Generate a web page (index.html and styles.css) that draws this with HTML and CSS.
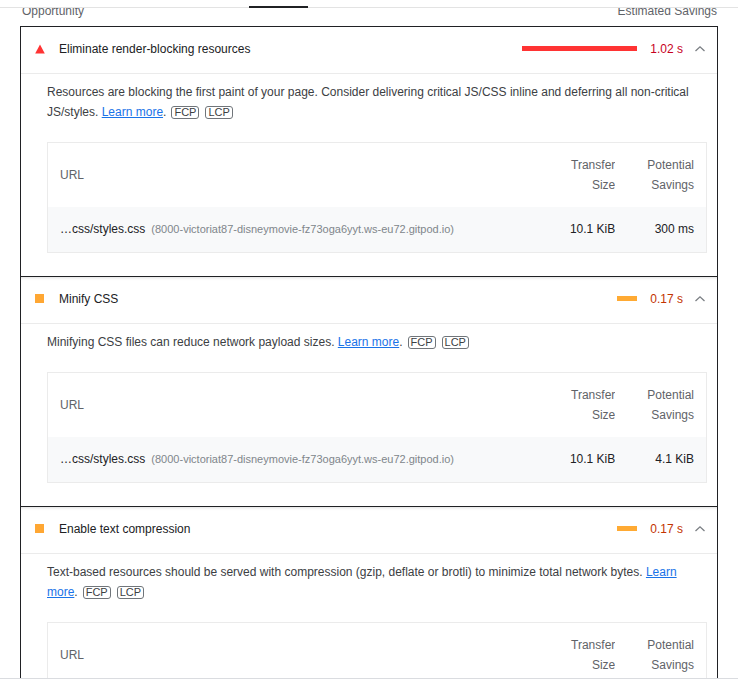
FILE: index.html
```html
<!DOCTYPE html>
<html lang="en">
<head>
<meta charset="utf-8">
<title>Opportunities</title>
<link rel="stylesheet" href="styles.css">
</head>
<body>
<div class="page">
  <div class="topbar"><span class="tab-ind"></span></div>
  <div class="colhead">
    <div class="colhead-inner"><span>Opportunity</span><span>Estimated Savings</span></div>
  </div>
  <div class="audits">
    <div class="audit">
      <div class="audit-header">
        <svg class="icon" width="10" height="10" viewBox="0 0 10 10"><polygon points="5,0.5 9.8,9.5 0.2,9.5" fill="#ff3333"/></svg>
        <span class="title">Eliminate render-blocking resources</span>
        <span class="bar bar-fail" style="width:115px"></span>
        <span class="value value-fail">1.02 s</span>
        <svg class="chev" width="14" height="10" viewBox="0 0 14 10"><polyline points="2.5,7 7,2.8 11.5,7" fill="none" stroke="#7a7e83" stroke-width="1.3"/></svg>
      </div>
      <div class="audit-body">
        <p class="desc">Resources are blocking the first paint of your page. Consider delivering critical JS/CSS inline and deferring all non-critical JS/styles. <a class="link" href="#">Learn more</a>.<span class="tag">FCP</span><span class="tag">LCP</span></p>
        <div class="table">
          <div class="th th-url">URL</div>
          <div class="th num">Transfer<br>Size</div>
          <div class="th num">Potential<br>Savings</div>
          <div class="td td-url"><span class="file">…css/styles.css</span><span class="host">(8000-victoriat87-disneymovie-fz73oga6yyt.ws-eu72.gitpod.io)</span></div>
          <div class="td num">10.1 KiB</div>
          <div class="td num">300 ms</div>
        </div>
      </div>
    </div>
    <div class="audit">
      <div class="audit-header">
        <span class="square"></span>
        <span class="title">Minify CSS</span>
        <span class="bar bar-avg" style="width:20px"></span>
        <span class="value value-avg">0.17 s</span>
        <svg class="chev" width="14" height="10" viewBox="0 0 14 10"><polyline points="2.5,7 7,2.8 11.5,7" fill="none" stroke="#7a7e83" stroke-width="1.3"/></svg>
      </div>
      <div class="audit-body">
        <p class="desc">Minifying CSS files can reduce network payload sizes. <a class="link" href="#">Learn more</a>.<span class="tag">FCP</span><span class="tag">LCP</span></p>
        <div class="table">
          <div class="th th-url">URL</div>
          <div class="th num">Transfer<br>Size</div>
          <div class="th num">Potential<br>Savings</div>
          <div class="td td-url"><span class="file">…css/styles.css</span><span class="host">(8000-victoriat87-disneymovie-fz73oga6yyt.ws-eu72.gitpod.io)</span></div>
          <div class="td num">10.1 KiB</div>
          <div class="td num">4.1 KiB</div>
        </div>
      </div>
    </div>
    <div class="audit">
      <div class="audit-header">
        <span class="square"></span>
        <span class="title">Enable text compression</span>
        <span class="bar bar-avg" style="width:20px"></span>
        <span class="value value-avg">0.17 s</span>
        <svg class="chev" width="14" height="10" viewBox="0 0 14 10"><polyline points="2.5,7 7,2.8 11.5,7" fill="none" stroke="#7a7e83" stroke-width="1.3"/></svg>
      </div>
      <div class="audit-body">
        <p class="desc">Text-based resources should be served with compression (gzip, deflate or brotli) to minimize total network bytes. <a class="link" href="#">Learn more</a>.<span class="tag">FCP</span><span class="tag">LCP</span></p>
        <div class="table">
          <div class="th th-url">URL</div>
          <div class="th num">Transfer<br>Size</div>
          <div class="th num">Potential<br>Savings</div>
          <div class="td td-url"><span class="file">…css/styles.css</span><span class="host">(8000-victoriat87-disneymovie-fz73oga6yyt.ws-eu72.gitpod.io)</span></div>
          <div class="td num">10.1 KiB</div>
          <div class="td num">1.2 KiB</div>
        </div>
      </div>
    </div>
  </div>
</div>
</body>
</html>
```
FILE: styles.css
```css
html, body {
  margin: 0;
  padding: 0;
  background: #ffffff;
}
body {
  font-family: "Liberation Sans", Arial, sans-serif;
  font-size: 12px;
  color: #202124;
}
.page {
  height: 678px;
  overflow: hidden;
  border-bottom: 1px solid #dadce0;
}
.topbar {
  height: 7px;
  border-bottom: 1px solid #e3e3e3;
  display: flex;
  align-items: flex-end;
  padding-left: 249px;
}
.tab-ind {
  display: block;
  width: 59px;
  height: 2px;
  margin-bottom: -1px;
  background: #202124;
}
.colhead {
  height: 18px;
  overflow: hidden;
}
.colhead-inner {
  margin-top: -7px;
  line-height: 20px;
  display: flex;
  justify-content: space-between;
  padding: 0 21px 0 22px;
  color: #5f6368;
}
.audits {
  padding: 0 20px;
}
.audit {
  border: 1px solid #202124;
}
.audit + .audit {
  border-top: none;
}
.audit-header {
  display: flex;
  align-items: center;
  height: 43px;
  padding: 0 10px 3px 14px;
  border-bottom: 1px solid #ebebeb;
  line-height: 20px;
}
.audit + .audit .audit-header {
  box-shadow: inset 0 3px 3px -2px rgba(0, 0, 0, 0.12);
}
.icon {
  display: block;
  flex: none;
}
.square {
  display: block;
  flex: none;
  width: 9px;
  height: 9px;
  margin-right: 1px;
  background: #ffa733;
}
.title {
  margin-left: 14px;
  flex: 1;
  color: #202124;
}
.bar {
  display: block;
  height: 5px;
  flex: none;
}
.bar-fail { background: #ff3333; }
.bar-avg { background: #ffaa33; }
.value {
  margin-left: 13px;
}
.value-fail { color: #c7001e; }
.value-avg { color: #c33300; }
.chev {
  display: block;
  margin-left: 10px;
  flex: none;
}
.audit-body {
  padding: 8px 10px 23px 26px;
}
.desc {
  margin: 0;
  line-height: 20px;
  color: #3c4043;
}
.link {
  color: #1a73e8;
  text-decoration: underline;
}
.tag {
  display: inline-block;
  font-size: 11px;
  line-height: 11px;
  padding: 0 2px;
  margin-left: 5px;
  border: 1px solid #70757a;
  border-radius: 3px;
  color: #3c4043;
  vertical-align: 0;
}
.tag + .tag {
  margin-left: 6px;
}
.table {
  margin-top: 20px;
  border: 1px solid #ebebeb;
  display: grid;
  grid-template-columns: 1fr auto auto;
}
.th, .td {
  line-height: 20px;
}
.th {
  padding: 12px 0;
  color: #5f6368;
  background: #ffffff;
}
.td {
  padding: 12px 0 13px;
  background: #f8f9fa;
}
.th-url, .td-url {
  padding-left: 12px;
  display: flex;
  align-items: center;
}
.num {
  text-align: right;
  padding-left: 32px;
}
.table > .num:nth-child(3), .table > .num:nth-child(6) {
  padding-right: 12px;
}
.file {
  color: #202124;
}
.host {
  margin-left: 6px;
  font-size: 11px;
  color: #80868b;
}
```
